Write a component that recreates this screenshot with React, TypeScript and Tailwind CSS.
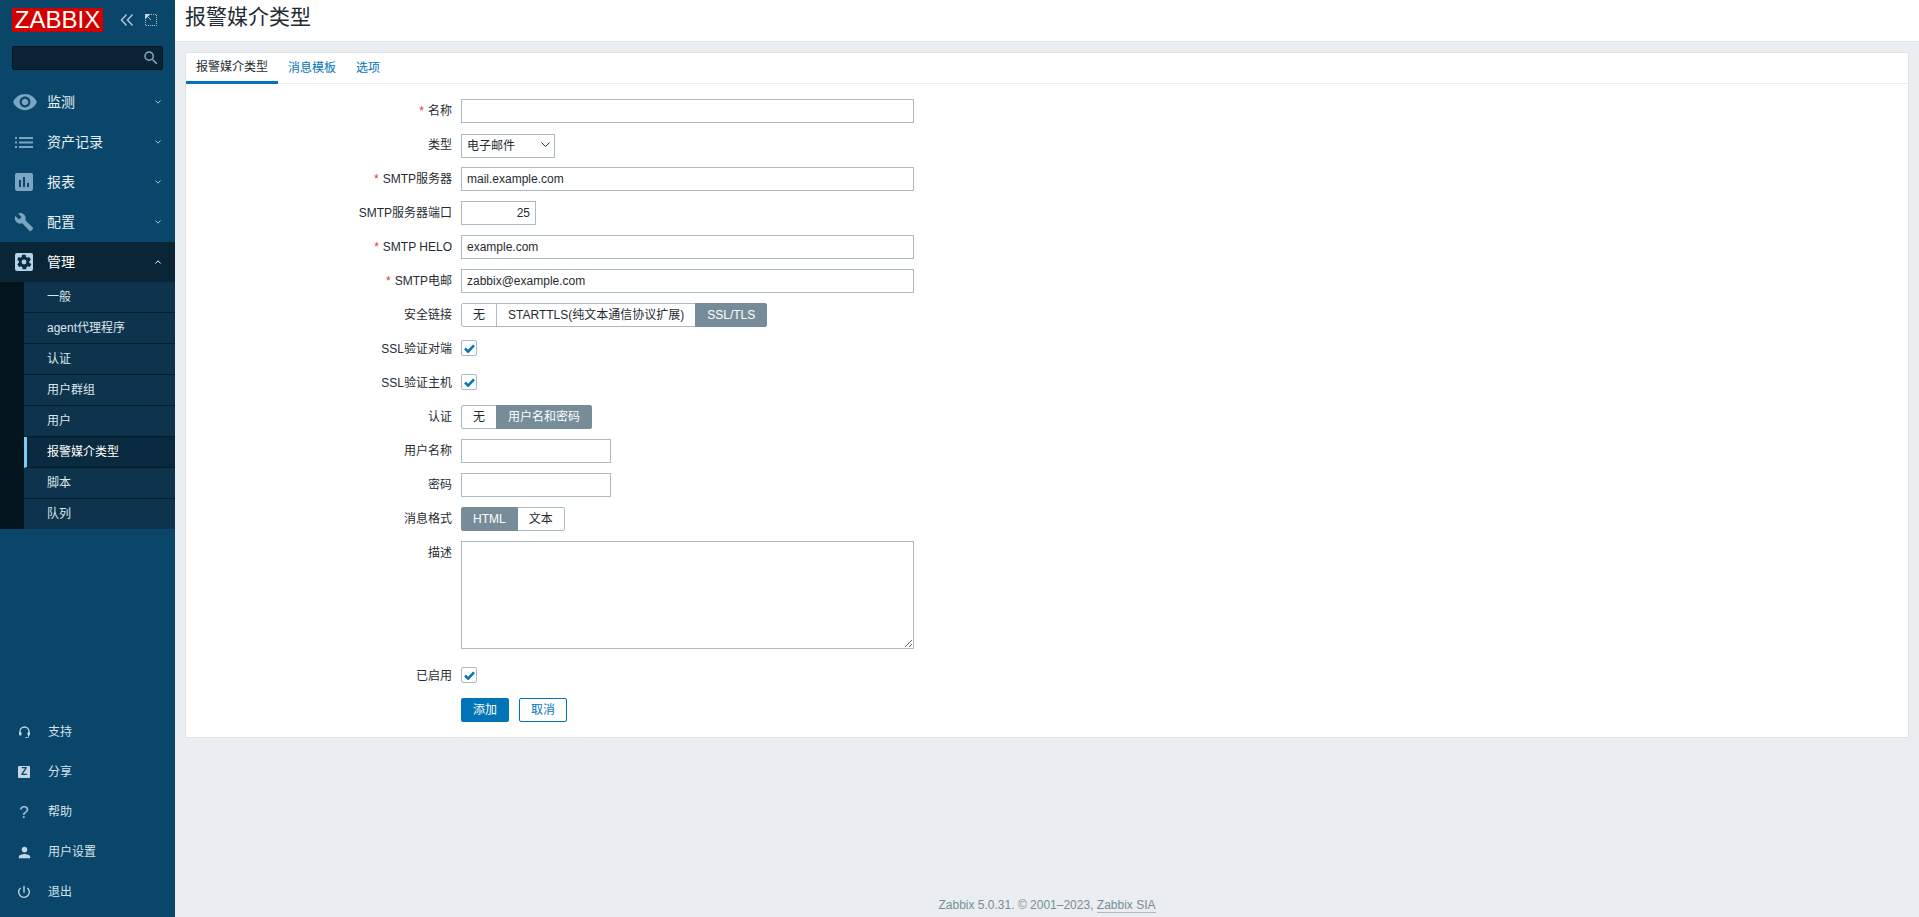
import type { ReactNode } from 'react'
import { MdAssessment, MdBuild, MdPerson, MdPowerSettingsNew, MdSearch, MdVisibility } from 'react-icons/md'

type NavItem = { label: string; icon: ReactNode; open?: boolean }

const GearBox = () => (
  <svg viewBox="0 0 18 18" className="h-[18px] w-[18px]">
    <rect width="18" height="18" rx="2" fill="#b4d3e8" />
    <path
      fill="#0a2a3f"
      d="M14.2 9.7c0-.2.1-.5.1-.7s0-.5-.1-.7l1.5-1.2c.1-.1.2-.3.1-.4l-1.4-2.5c-.1-.2-.3-.2-.4-.2l-1.8.7c-.4-.3-.8-.5-1.2-.7l-.3-1.9c0-.2-.2-.3-.4-.3H7.500c-.2 0-.3.1-.4.3l-.3 1.900c-.4.2-.8.4-1.200.7l-1.800-.7c-.2-.1-.3 0-.4.2L2.400 6.700c-.1.100 0 .3.1.4L4 8.300c0 .2-.1.5-.1.7s0 .5.1.7l-1.500 1.200c-.1.100-.2.3-.1.4l1.400 2.500c.1.2.3.2.4.2l1.800-.7c.4.3.8.5 1.200.7l.3 1.900c0 .2.2.3.4.3h2.900c.2 0 .3-.1.4-.3l.3-1.900c.4-.2.8-.4 1.200-.7l1.800.7c.2.100.3 0 .4-.2l1.400-2.500c.1-.1 0-.3-.1-.4zM9 11.400a2.400 2.400 0 1 1 0-4.800 2.400 2.400 0 0 1 0 4.800z"
    />
  </svg>
)

const ListIcon = () => (
  <svg viewBox="0 0 18 11" className="h-[11px] w-[18px]" fill="#7ba5c2">
    <rect x="0" y="0" width="2" height="2" />
    <rect x="4" y="0" width="14" height="2" />
    <rect x="0" y="4.500" width="2" height="2" />
    <rect x="4" y="4.500" width="14" height="2" />
    <rect x="0" y="9" width="2" height="2" />
    <rect x="4" y="9" width="14" height="2" />
  </svg>
)

const ZBox = () => (
  <span className="flex h-3 w-3 items-center justify-center rounded-[1px] bg-[#c3d6e2] text-[10px] font-bold leading-none text-[#0a466a]">
    Z
  </span>
)

const Headset = () => (
  <svg viewBox="0 0 11 13" className="h-[13px] w-[11px]" fill="none" stroke="#c3d6e2">
    <path d="M1 8V5.500a4.500 4.500 0 0 1 9 0V8" strokeWidth="1.300" />
    <rect x="0" y="6" width="2.500" height="3.500" rx="1" fill="#c3d6e2" stroke="none" />
    <rect x="8.500" y="6" width="2.500" height="3.500" rx="1" fill="#c3d6e2" stroke="none" />
    <path d="M9.500 9v1.500q0 1-1 1H6.500" strokeWidth="1" />
  </svg>
)

const Chevron = ({ up, color }: { up?: boolean; color: string }) => (
  <svg viewBox="0 0 6 4" className={`mr-[14px] h-1 w-[6px] ${up ? 'rotate-180' : ''}`} fill="none" stroke={color} strokeWidth="1">
    <path d="M.5 .5L3 3.200 5.500 .5" />
  </svg>
)

const mainNav: NavItem[] = [
  { label: '监测', icon: <MdVisibility className="ml-[-3px] h-[26px] w-[26px] text-[#7ba5c2]" /> },
  { label: '资产记录', icon: <ListIcon /> },
  { label: '报表', icon: <MdAssessment className="ml-[-3px] h-[24px] w-[24px] text-[#7ba5c2]" /> },
  { label: '配置', icon: <MdBuild className="ml-[-1px] h-5 w-5 text-[#7ba5c2]" /> },
  { label: '管理', icon: <GearBox />, open: true },
]

const subNav = ['一般', 'agent代理程序', '认证', '用户群组', '用户', '报警媒介类型', '脚本', '队列']

const bottomNav: { label: string; icon: ReactNode }[] = [
  { label: '支持', icon: <Headset /> },
  { label: '分享', icon: <ZBox /> },
  { label: '帮助', icon: <span className="text-[17px] leading-none text-[#a9c4d6]">?</span> },
  { label: '用户设置', icon: <MdPerson className="h-[17px] w-[17px] text-[#c3d6e2]" /> },
  { label: '退出', icon: <MdPowerSettingsNew className="h-[16px] w-[16px] text-[#c3d6e2]" /> },
]

const Sidebar = () => (
  <aside className="flex w-[175px] shrink-0 flex-col bg-[#0a466a]">
    <div className="flex items-center pl-3 pt-2">
      <div className="h-6 w-[91px] bg-[#d40000] text-center text-[24px] leading-[24px] text-white">ZABBIX</div>
      <svg viewBox="0 0 14 12" className="ml-[17px] h-3 w-[14px]" fill="none" stroke="#a9c4d6" strokeWidth="1.500">
        <path d="M6.500 .5L1.500 6l5 5.500M12.500 .5L7.500 6l5 5.500" />
      </svg>
      <svg viewBox="0 0 12 12" className="ml-[11px] h-3 w-3" fill="none" stroke="#a9c4d6" strokeWidth="1">
        <path d="M6 .5h5.500v11H.5V6" strokeDasharray="1 1" />
        <path d="M0 0H5.500L0 5.500z" fill="#c3d6e2" stroke="none" />
        <path d="M3 3L6 6" />
      </svg>
    </div>
    <div className="mx-3 mt-[14px] flex h-6 w-[151px] items-center justify-end rounded-[2px] border border-[#03141e] bg-[#0a2435] pr-[2px]">
      <MdSearch className="h-[18px] w-[18px] text-[#8aa6b8]" />
    </div>
    <nav className="mt-3">
      {mainNav.map((item) => (
        <div key={item.label}>
          <div className={`flex h-10 items-center ${item.open ? 'bg-[#0a2636] text-white' : 'text-[#e6eff5]'}`}>
            <span className="flex w-[47px] shrink-0 items-center pl-[15px]">{item.icon}</span>
            <span className="flex-1 text-[14px]">{item.label}</span>
            {item.open ? <Chevron up color="#e6eff5" /> : <Chevron color="#a9c4d6" />}
          </div>
          {item.open && (
            <div className="flex bg-[#04141d]">
              <div className="w-6 shrink-0" />
              <ul className="flex-1">
                {subNav.map((s) => {
                  const active = s === '报警媒介类型'
                  return (
                    <li
                      key={s}
                      className={`flex h-[31px] items-center border-b border-[#051c2b] text-[12px] last:h-[30px] last:border-b-0 ${
                        active
                          ? 'border-l-[3px] border-l-[#7fcbf7] bg-[#0a2a3f] pl-5 text-white'
                          : 'bg-[#0e344d] pl-[23px] text-[#dbe7ef]'
                      }`}
                    >
                      {s}
                    </li>
                  )
                })}
              </ul>
            </div>
          )}
        </div>
      ))}
    </nav>
    <nav className="mt-auto pb-[5px]">
      {bottomNav.map((item) => (
        <div key={item.label} className="flex h-10 items-center text-[12px] text-[#d5e3ec]">
          <span className="flex w-12 shrink-0 justify-center">{item.icon}</span>
          <span>{item.label}</span>
        </div>
      ))}
    </nav>
  </aside>
)

const inputCls = 'h-6 border border-[#acbbc2] bg-white px-[5px] text-[12px] text-[#1f2c33] outline-none'

const Row = ({ label, required, children }: { label: string; required?: boolean; children: ReactNode }) => (
  <div className="flex min-h-6 gap-[9px]">
    <div className="w-[266px] shrink-0 text-right text-[12px] leading-6 text-[#1f2c33]">
      {required && <span className="mr-1 text-[#e33734]">*</span>}
      {label}
    </div>
    {children}
  </div>
)

const Check = () => (
  <div className="flex h-[22px] items-center">
    <span className="flex h-4 w-4 items-center justify-center rounded-[2px] border border-[#acbbc2] bg-white">
      <svg viewBox="0 0 12 10" className="h-[9px] w-[11px]" fill="none" stroke="#0275b8" strokeWidth="2.800">
        <path d="M1 5l3.500 3.500L11 1.500" />
      </svg>
    </span>
  </div>
)

const Segmented = ({ options, active }: { options: string[]; active: string }) => (
  <div className="flex h-6 text-[12px] text-[#1f2c33]">
    {options.map((o) => (
      <span
        key={o}
        className={`-ml-px flex items-center border px-[11px] first:ml-0 first:rounded-l-[2px] last:rounded-r-[2px] ${
          o === active ? 'z-10 border-[#768d99] bg-[#768d99] text-white' : 'border-[#acbbc2] bg-white'
        }`}
      >
        {o}
      </span>
    ))}
  </div>
)

const App = () => (
  <div className="flex min-h-screen bg-[#ebeef0] [font-family:'Liberation_Sans','Noto_Sans_CJK_SC',sans-serif]">
    <Sidebar />
    <main className="flex min-w-0 flex-1 flex-col">
      <header className="flex h-[42px] items-center border-b border-[#dfe4e7] bg-white pb-2 pl-[10px] text-[21px] text-[#1f2c33]">
        报警媒介类型
      </header>
      <section className="mx-[10px] mt-[10px] border border-[#dfe4e7] bg-white pb-[15px]">
        <div className="flex h-[31px] border-b border-[#ebeef0] text-[12px]">
          <span className="-mb-px flex items-center border-b-[3px] border-[#0275b8] px-[10px] text-[#1f2c33]">报警媒介类型</span>
          <span className="flex items-center px-[10px] text-[#0275b8]">消息模板</span>
          <span className="flex items-center px-[10px] text-[#0275b8]">选项</span>
        </div>
        <form className="flex flex-col gap-[10px] pt-[15px]">
          <Row label="名称" required>
            <input className={`${inputCls} w-[453px]`} />
          </Row>
          <Row label="类型">
            <div className="relative h-6 w-[94px]">
              <select className={`${inputCls} w-full appearance-none`}>
                <option>电子邮件</option>
              </select>
              <svg viewBox="0 0 9 5" className="absolute right-[5px] top-[9px] h-[5px] w-[9px]" fill="none" stroke="#1f2c33">
                <path d="M.5 .5L4.500 4.500 8.500 .5" />
              </svg>
            </div>
          </Row>
          <Row label="SMTP服务器" required>
            <input className={`${inputCls} w-[453px]`} defaultValue="mail.example.com" />
          </Row>
          <Row label="SMTP服务器端口">
            <input className={`${inputCls} w-[75px] text-right`} defaultValue="25" />
          </Row>
          <Row label="SMTP HELO" required>
            <input className={`${inputCls} w-[453px]`} defaultValue="example.com" />
          </Row>
          <Row label="SMTP电邮" required>
            <input className={`${inputCls} w-[453px]`} defaultValue="zabbix@example.com" />
          </Row>
          <Row label="安全链接">
            <Segmented options={['无', 'STARTTLS(纯文本通信协议扩展)', 'SSL/TLS']} active="SSL/TLS" />
          </Row>
          <Row label="SSL验证对端">
            <Check />
          </Row>
          <Row label="SSL验证主机">
            <Check />
          </Row>
          <Row label="认证">
            <Segmented options={['无', '用户名和密码']} active="用户名和密码" />
          </Row>
          <Row label="用户名称">
            <input className={`${inputCls} w-[150px]`} />
          </Row>
          <Row label="密码">
            <input type="password" className={`${inputCls} w-[150px]`} />
          </Row>
          <Row label="消息格式">
            <Segmented options={['HTML', '文本']} active="HTML" />
          </Row>
          <Row label="描述">
            <textarea className="h-[108px] w-[453px] border border-[#acbbc2] bg-white outline-none" />
          </Row>
          <div className="mt-[5px]">
            <Row label="已启用">
              <Check />
            </Row>
          </div>
          <div className="flex gap-[10px] pl-[275px] text-[12px]">
            <button type="button" className="h-6 w-12 rounded-[2px] bg-[#0275b8] text-white">
              添加
            </button>
            <button type="button" className="h-6 w-12 rounded-[2px] border border-[#0275b8] bg-white text-[#0275b8]">
              取消
            </button>
          </div>
        </form>
      </section>
      <footer className="mt-auto pb-[3px] text-center text-[12px] text-[#768d99]">
        Zabbix 5.0.31. © 2001–2023, <span className="border-b border-[#acbbc2]">Zabbix SIA</span>
      </footer>
    </main>
  </div>
)

export default App
